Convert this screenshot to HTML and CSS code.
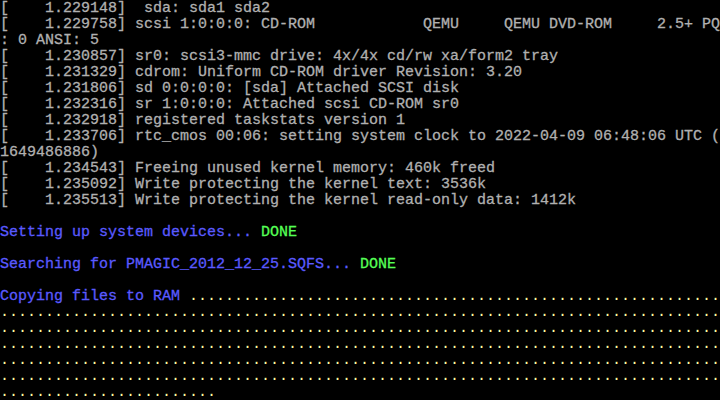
FILE: index.html
```html
<!DOCTYPE html>
<html>
  <head>
    <title>Console</title>
    <link rel="stylesheet" href="styles.css">
  </head>
  <body>
    <pre class="console">[    1.229148]  sda: sda1 sda2
[    1.229758] scsi 1:0:0:0: CD-ROM            QEMU     QEMU DVD-ROM     2.5+ PQ
: 0 ANSI: 5
[    1.230857] sr0: scsi3-mmc drive: 4x/4x cd/rw xa/form2 tray
[    1.231329] cdrom: Uniform CD-ROM driver Revision: 3.20
[    1.231806] sd 0:0:0:0: [sda] Attached SCSI disk
[    1.232316] sr 1:0:0:0: Attached scsi CD-ROM sr0
[    1.232918] registered taskstats version 1
[    1.233706] rtc_cmos 00:06: setting system clock to 2022-04-09 06:48:06 UTC (
1649486886)
[    1.234543] Freeing unused kernel memory: 460k freed
[    1.235092] Write protecting the kernel text: 3536k
[    1.235513] Write protecting the kernel read-only data: 1412k

<span class="info">Setting up system devices... </span><span class="done">DONE</span>

<span class="info">Searching for PMAGIC_2012_12_25.SQFS... </span><span class="done">DONE</span>

<span class="info">Copying files to RAM </span><span class="dots">...........................................................
................................................................................
................................................................................
................................................................................
................................................................................
................................................................................
........................</span></pre>
  </body>
</html>
```

FILE: styles.css
```css
html, body {
  margin: 0;
  background: #000000;
}

.console {
  margin: 0;
  padding-top: 1px;
  width: 720px;
  height: 400px;
  box-sizing: border-box;
  overflow: hidden;
  font-family: "Liberation Mono", monospace;
  font-size: 15px;
  line-height: 16px;
  color: #b0b0b0;
  white-space: pre;
  -webkit-text-stroke: 0.3px currentColor;
}

.info {
  color: #5a5aff;
}

.done {
  color: #55ff55;
}

.dots {
  color: #ffffa0;
  -webkit-text-stroke: 0;
}
```
